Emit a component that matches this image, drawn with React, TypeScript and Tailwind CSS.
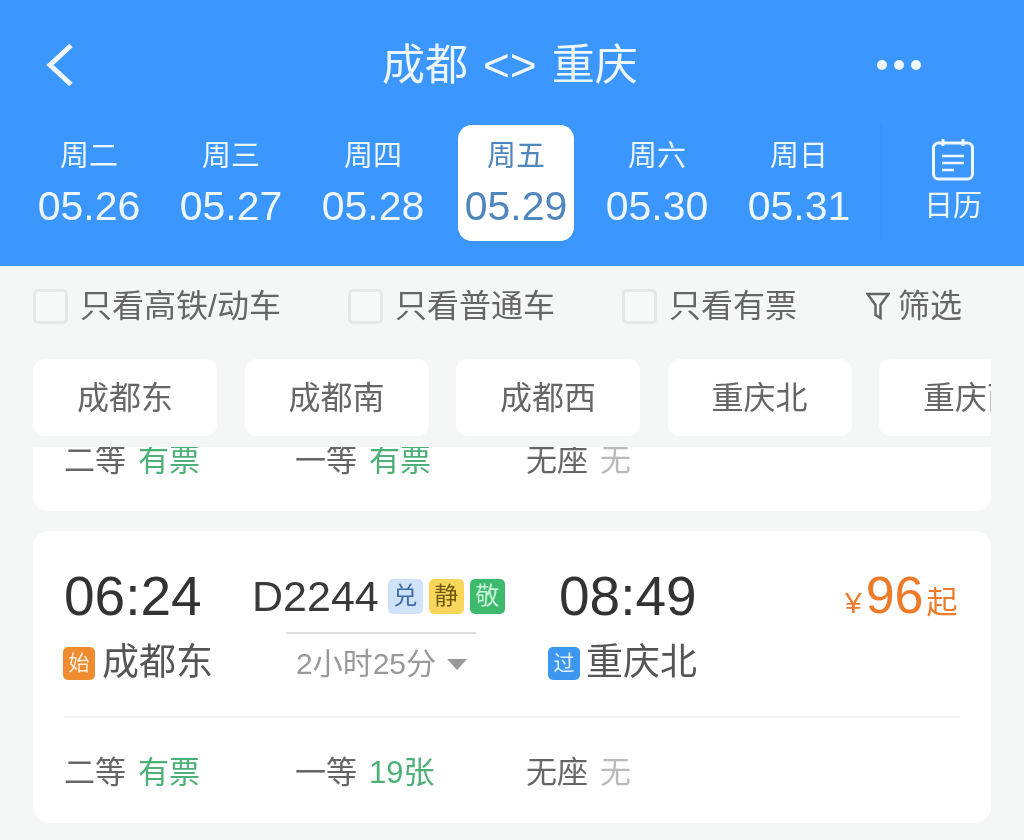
const days = [
  { week: "周二", date: "05.26" },
  { week: "周三", date: "05.27" },
  { week: "周四", date: "05.28" },
  { week: "周五", date: "05.29", active: true },
  { week: "周六", date: "05.30" },
  { week: "周日", date: "05.31" },
];

const filters = [
  { label: "只看高铁/动车", width: "w-[315px]" },
  { label: "只看普通车", width: "w-[274px]" },
  { label: "只看有票", width: "w-[244px]" },
];

const stations = ["成都东", "成都南", "成都西", "重庆北", "重庆西"];

const SeatRow = ({ second, first }: { second: string; first: string }) => (
  <div className="flex text-[31px] leading-[40px] text-[#666]">
    <div className="flex w-[231px] gap-[12px]">
      <span>二等</span>
      <span className="text-[#4db077]">{second}</span>
    </div>
    <div className="flex w-[231px] gap-[12px]">
      <span>一等</span>
      <span className="text-[#4db077]">{first}</span>
    </div>
    <div className="flex gap-[12px]">
      <span>无座</span>
      <span className="text-[#bbb]">无</span>
    </div>
  </div>
);

const Badge = ({ text, className }: { text: string; className: string }) => (
  <div className={`flex h-[35px] w-[35px] items-center justify-center rounded-[5px] text-[24px] ${className}`}>{text}</div>
);

const StopTag = ({ text, className }: { text: string; className: string }) => (
  <div className={`flex h-[33px] w-[32px] items-center justify-center rounded-[5px] text-[21px] text-white/85 ${className}`}>{text}</div>
);

export default function App() {
  return (
    <div
      className="h-[840px] w-[1024px] overflow-hidden bg-[#f5f6f6] blur-[0.7px]"
      style={{ fontFamily: '"Liberation Sans", "Noto Sans CJK SC", sans-serif' }}
    >
      {/* Header */}
      <div className="h-[266px] bg-[#3b97fd] text-[#eef6ff]">
        <div className="flex h-[125px] items-center pl-[44px] pr-[103px] pt-[5px]">
          <svg viewBox="0 0 30 44" className="h-[44px] w-[30px]" fill="none" stroke="currentColor" strokeWidth="5">
            <path d="M27 2.5 L6 22 L27 41.5" />
          </svg>
          <div className="ml-[308px] flex items-center gap-[15px] text-[43px] leading-[56px]">
            <span>成都</span>
            <span className="text-[46px]">&lt;&gt;</span>
            <span>重庆</span>
          </div>
          <div className="ml-auto flex gap-[7px]">
            <div className="h-[10px] w-[10px] rounded-full bg-[#eef6ff]" />
            <div className="h-[10px] w-[10px] rounded-full bg-[#eef6ff]" />
            <div className="h-[10px] w-[10px] rounded-full bg-[#eef6ff]" />
          </div>
        </div>

        <div className="flex pl-[18px]">
          {days.map((d) => (
            <div key={d.date} className="flex w-[142px] justify-center">
              <div
                className={`flex h-[116px] w-[116px] flex-col items-center pt-[11px] ${
                  d.active ? "ml-[2px] rounded-[14px] bg-white text-[#4f86bd]" : ""
                }`}
              >
                <div className="text-[29px] leading-[40px]">{d.week}</div>
                <div className="mt-[6px] whitespace-nowrap text-[41px] leading-[48px]">{d.date}</div>
              </div>
            </div>
          ))}
          <div className="ml-[10px] flex h-[116px] w-[144px] flex-col items-center border-l-2 border-[#3993f8] pt-[14px]">
            <svg viewBox="0 0 42 42" className="h-[42px] w-[42px]" fill="none" stroke="currentColor" strokeWidth="3">
              <rect x="1.5" y="4" width="39" height="36" rx="5" />
              <path d="M11 0 V7 M31 0 V7" />
              <path d="M10 17 H32 M10 24 H32 M10 31 H22" strokeWidth="2.5" />
            </svg>
            <div className="mt-[5px] text-[29px] leading-[40px]">日历</div>
          </div>
        </div>
      </div>

      {/* Filters */}
      <div className="flex h-[93px] items-center pl-[33px] pb-[16px] pt-[3px] text-[32px] text-[#666]">
        {filters.map((f) => (
          <div key={f.label} className={`flex items-center gap-[12px] ${f.width}`}>
            <div className="h-[35px] w-[35px] rounded-[5px] border-[3px] border-[#e6e7e7] bg-[#f7f8f8]" />
            <span className="whitespace-nowrap leading-[44px]">{f.label}</span>
          </div>
        ))}
        <div className="flex items-center gap-[8px]">
          <svg viewBox="0 0 24 30" className="h-[30px] w-[24px]" fill="none" stroke="currentColor" strokeWidth="2.5">
            <path d="M1.5 3 H22.5 L14.5 14 V27 L9.5 24 V14 Z" />
          </svg>
          <span className="leading-[44px]">筛选</span>
        </div>
      </div>

      {/* Station tabs */}
      <div className="mx-[33px] flex h-[77px] gap-[27.5px] overflow-hidden">
        {stations.map((s) => (
          <div
            key={s}
            className="flex h-[77px] w-[184px] shrink-0 items-center justify-center rounded-[12px] bg-white text-[32px] text-[#666]"
          >
            {s}
          </div>
        ))}
      </div>

      {/* Train list */}
      <div className="mx-[33px] mt-[11px] flex flex-col gap-[20px]">
        <div className="h-[64px] overflow-hidden rounded-b-[14px] bg-white pl-[31px]">
          <div className="-mt-[6px]">
            <SeatRow second="有票" first="有票" />
          </div>
        </div>

        <div className="h-[292px] rounded-[16px] bg-white px-[31px]">
          <div className="flex h-[187px] border-b-2 border-[#f3f3f3] pt-[36px]">
            <div className="w-[188px]">
              <div className="text-[55px] leading-[58px] text-[#333]">06:24</div>
              <div className="mt-[16px] flex items-center gap-[7px] text-[37px] leading-[44px] text-[#555]">
                <StopTag text="始" className="-ml-[1px] bg-[#f08c30]" />
                成都东
              </div>
            </div>
            <div className="w-[296px]">
              <div className="flex h-[58px] items-center">
                <span className="mr-[9px] text-[43px] text-[#3a3a3a]">D2244</span>
                <div className="flex gap-[6px]">
                  <Badge text="兑" className="bg-[#cfe2f8] text-[#3d6da8]" />
                  <Badge text="静" className="bg-[#f8d65a] text-[#6d5a10]" />
                  <Badge text="敬" className="bg-[#3dba6c] text-[#c9f0d8]" />
                </div>
              </div>
              <div className="ml-[34px] mt-[7px] h-[2px] w-[190px] bg-[#dedede]" />
              <div className="ml-[44px] mt-[8px] flex items-center gap-[11px] text-[30px] leading-[44px] text-[#999]">
                2小时25分
                <div className="h-0 w-0 border-x-[10px] border-t-[11px] border-x-transparent border-t-[#999]" />
              </div>
            </div>
            <div className="w-[288px]">
              <div className="ml-[11px] text-[55px] leading-[58px] text-[#333]">08:49</div>
              <div className="mt-[16px] flex items-center gap-[6px] text-[37px] leading-[44px] text-[#555]">
                <StopTag text="过" className="bg-[#3b97ef]" />
                重庆北
              </div>
            </div>
            <div className="-mt-[1px] flex h-[58px] flex-1 items-baseline whitespace-nowrap pl-[9px] text-[#ee7b2a]">
              <span className="mr-[4px] text-[30px]">¥</span>
              <span className="text-[52px] leading-[58px]">96</span>
              <span className="ml-[3px] text-[31px]">起</span>
            </div>
          </div>
          <div className="mt-[35px]">
            <SeatRow second="有票" first="19张" />
          </div>
        </div>
      </div>
    </div>
  );
}
